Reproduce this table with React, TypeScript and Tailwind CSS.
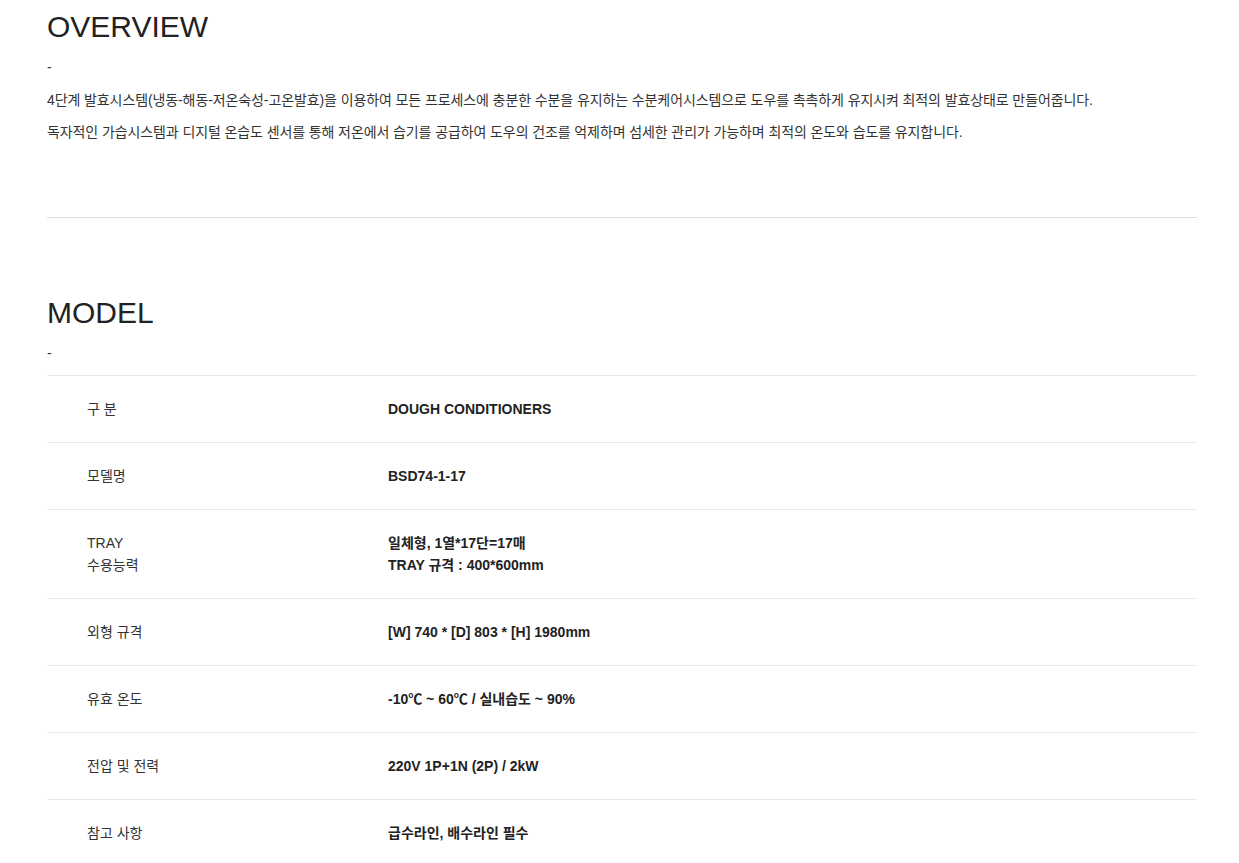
import React from "react";

const rows: { label: string[]; value: string[] }[] = [
  { label: ["구 분"], value: ["DOUGH CONDITIONERS"] },
  { label: ["모델명"], value: ["BSD74-1-17"] },
  { label: ["TRAY", "수용능력"], value: ["일체형, 1열*17단=17매", "TRAY 규격 : 400*600mm"] },
  { label: ["외형 규격"], value: ["[W] 740 * [D] 803 * [H] 1980mm"] },
  { label: ["유효 온도"], value: ["-10℃ ~ 60℃ / 실내습도 ~ 90%"] },
  { label: ["전압 및 전력"], value: ["220V 1P+1N (2P) / 2kW"] },
  { label: ["참고 사항"], value: ["급수라인, 배수라인 필수"] },
];

export default function App() {
  return (
    <div
      className="min-h-[863px] bg-white text-[#333]"
      style={{ fontFamily: '"Liberation Sans", "Noto Sans CJK KR", Arial, sans-serif' }}
    >
      <div className="ml-[47px] w-[1150px]">
        <section className="pt-[9px]">
          <h2 className="text-[30px] leading-[36px] font-normal text-[#222]">OVERVIEW</h2>
          <div className="mt-[11px] text-[14px] leading-[22px]">-</div>
          <p className="mt-[11px] text-[14px] leading-[22px] tracking-[-0.1px]">
            4단계 발효시스템(냉동-해동-저온숙성-고온발효)을 이용하여 모든 프로세스에 충분한 수분을 유지하는 수분케어시스템으로 도우를 촉촉하게 유지시켜 최적의 발효상태로 만들어줍니다.
          </p>
          <p className="mt-[10px] text-[14px] leading-[22px] tracking-[-0.1px]">
            독자적인 가습시스템과 디지털 온습도 센서를 통해 저온에서 습기를 공급하여 도우의 건조를 억제하며 섬세한 관리가 가능하며 최적의 온도와 습도를 유지합니다.
          </p>
        </section>
        <div className="mt-[74px] h-px bg-[#dcdcdc]" />
        <section className="pt-[77px]">
          <h2 className="text-[30px] leading-[36px] font-normal text-[#222]">MODEL</h2>
          <div className="mt-[11px] text-[14px] leading-[22px]">-</div>
          <div className="mt-[11px] border-t border-[#e8e8e8]">
            {rows.map((r, i) => (
              <div key={i} className="flex border-b border-[#e8e8e8] py-[22px] text-[14px] leading-[22px]">
                <div className="w-[341px] shrink-0 pl-[40px] text-[#333]">
                  {r.label.map((l, j) => (
                    <div key={j}>{l}</div>
                  ))}
                </div>
                <div className="font-bold text-[#222]">
                  {r.value.map((v, j) => (
                    <div key={j}>{v}</div>
                  ))}
                </div>
              </div>
            ))}
          </div>
        </section>
      </div>
    </div>
  );
}
